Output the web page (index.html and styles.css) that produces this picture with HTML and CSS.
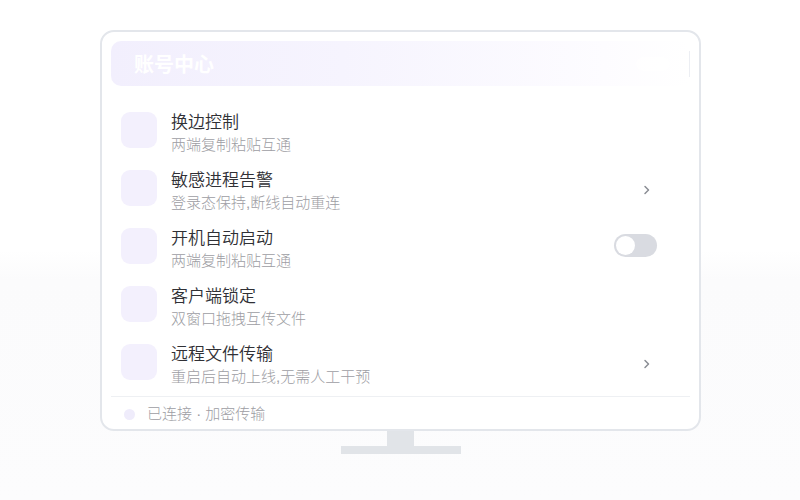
FILE: index.html
```html
<!DOCTYPE html>
<html lang="zh">
<head>
<meta charset="utf-8">
<link rel="stylesheet" href="styles.css">
</head>
<body>
<div class="page">
  <div class="monitor">
    <div class="screen">
      <div class="header">
        <span class="header-title">账号中心</span>
        <span class="header-tools"><span class="tool-pill"></span></span>
      </div>
      <div class="list">
        <div class="row">
          <div class="icon"></div>
          <div class="text">
            <div class="title">换边控制</div>
            <div class="sub">两端复制粘贴互通</div>
          </div>
        </div>
        <div class="row">
          <div class="icon"></div>
          <div class="text">
            <div class="title">敏感进程告警</div>
            <div class="sub">登录态保持,断线自动重连</div>
          </div>
          <div class="chev"><svg width="8" height="10" viewBox="0 0 8 10"><polyline points="2,1.5 5.5,5 2,8.5" fill="none" stroke="#8a8d94" stroke-width="1.5" stroke-linecap="round" stroke-linejoin="round"/></svg></div>
        </div>
        <div class="row">
          <div class="icon"></div>
          <div class="text">
            <div class="title">开机自动启动</div>
            <div class="sub">两端复制粘贴互通</div>
          </div>
          <div class="toggle"><span class="knob"></span></div>
        </div>
        <div class="row">
          <div class="icon"></div>
          <div class="text">
            <div class="title">客户端锁定</div>
            <div class="sub">双窗口拖拽互传文件</div>
          </div>
        </div>
        <div class="row">
          <div class="icon"></div>
          <div class="text">
            <div class="title">远程文件传输</div>
            <div class="sub">重启后自动上线,无需人工干预</div>
          </div>
          <div class="chev"><svg width="8" height="10" viewBox="0 0 8 10"><polyline points="2,1.5 5.5,5 2,8.5" fill="none" stroke="#8a8d94" stroke-width="1.5" stroke-linecap="round" stroke-linejoin="round"/></svg></div>
        </div>
      </div>
      <div class="divider"></div>
      <div class="footer">
        <span class="dot"></span>
        <span class="footer-text">已连接 · 加密传输</span>
      </div>
    </div>
    <div class="neck"></div>
    <div class="base"></div>
  </div>
</div>
</body>
</html>
```

FILE: styles.css
```css
html, body {
  margin: 0;
  padding: 0;
}
body {
  width: 800px;
  height: 500px;
  background: linear-gradient(180deg, #ffffff 0%, #ffffff 50%, #fbfbfc 56%, #fcfcfd 100%);
  font-family: "Liberation Sans", "Noto Sans CJK SC", sans-serif;
  overflow: hidden;
}
.page {
  padding: 30px 0 0 100px;
}
.monitor {
  width: 601px;
  display: flex;
  flex-direction: column;
  align-items: center;
}
.screen {
  width: 601px;
  height: 401px;
  box-sizing: border-box;
  border: 2px solid #e3e6eb;
  border-radius: 14px;
  background: #ffffff;
  padding: 9px 9px 0 9px;
  display: flex;
  flex-direction: column;
}
.header {
  height: 45px;
  box-sizing: border-box;
  border-radius: 10px;
  background: linear-gradient(90deg, #f2effd 0%, #f6f4fe 40%, #fdfcff 85%, #ffffff 100%);
  display: flex;
  align-items: center;
  justify-content: space-between;
  padding: 0 20px 0 23px;
  position: relative;
}
.header::after {
  content: "";
  position: absolute;
  right: 0;
  top: 10px;
  bottom: 9px;
  width: 1px;
  background: #eceef3;
}
.header-title {
  color: #ffffff;
  font-size: 20px;
  font-weight: 700;
  line-height: 24px;
  margin-top: 2px;
}
.header-tools {
  display: flex;
  align-items: center;
}
.tool-pill {
  width: 34px;
  height: 14px;
  border-radius: 7px;
  background: #ffffff;
  opacity: 0.6;
}
.list {
  margin-top: 17px;
  display: flex;
  flex-direction: column;
}
.row {
  height: 58px;
  box-sizing: border-box;
  padding: 7px 33px 7px 10px;
  display: flex;
  align-items: flex-start;
}
.icon {
  width: 36px;
  height: 36px;
  margin-top: 2px;
  border-radius: 9px;
  background: #f3f0fd;
  flex: none;
}
.text {
  margin-left: 14px;
  padding-top: 2px;
  flex: 1;
}
.title {
  font-size: 17px;
  line-height: 22px;
  font-weight: 350;
  color: #303035;
}
.sub {
  font-size: 15px;
  line-height: 22px;
  font-weight: 300;
  color: #9d9da3;
}
.chev {
  width: 20px;
  height: 44px;
  display: flex;
  align-items: center;
  justify-content: center;
}
.toggle {
  width: 43px;
  height: 23px;
  margin-top: 8px;
  border-radius: 12px;
  background: #d9dbe1;
  position: relative;
  flex: none;
}
.knob {
  position: absolute;
  left: 2px;
  top: 2px;
  width: 19px;
  height: 19px;
  border-radius: 50%;
  background: #ffffff;
}
.divider {
  margin-top: 3px;
  height: 1px;
  background: #eef0f3;
}
.footer {
  height: 32px;
  box-sizing: border-box;
  padding: 6px 0 4px 13px;
  display: flex;
  align-items: center;
}
.dot {
  width: 11px;
  height: 11px;
  border-radius: 50%;
  background: #efecfb;
  flex: none;
}
.footer-text {
  margin-left: 12px;
  font-size: 15px;
  line-height: 22px;
  font-weight: 300;
  color: #9d9da3;
}
.neck {
  width: 27px;
  height: 15px;
  background: #e1e4e8;
}
.base {
  width: 120px;
  height: 8px;
  background: #e1e4e8;
}
```
